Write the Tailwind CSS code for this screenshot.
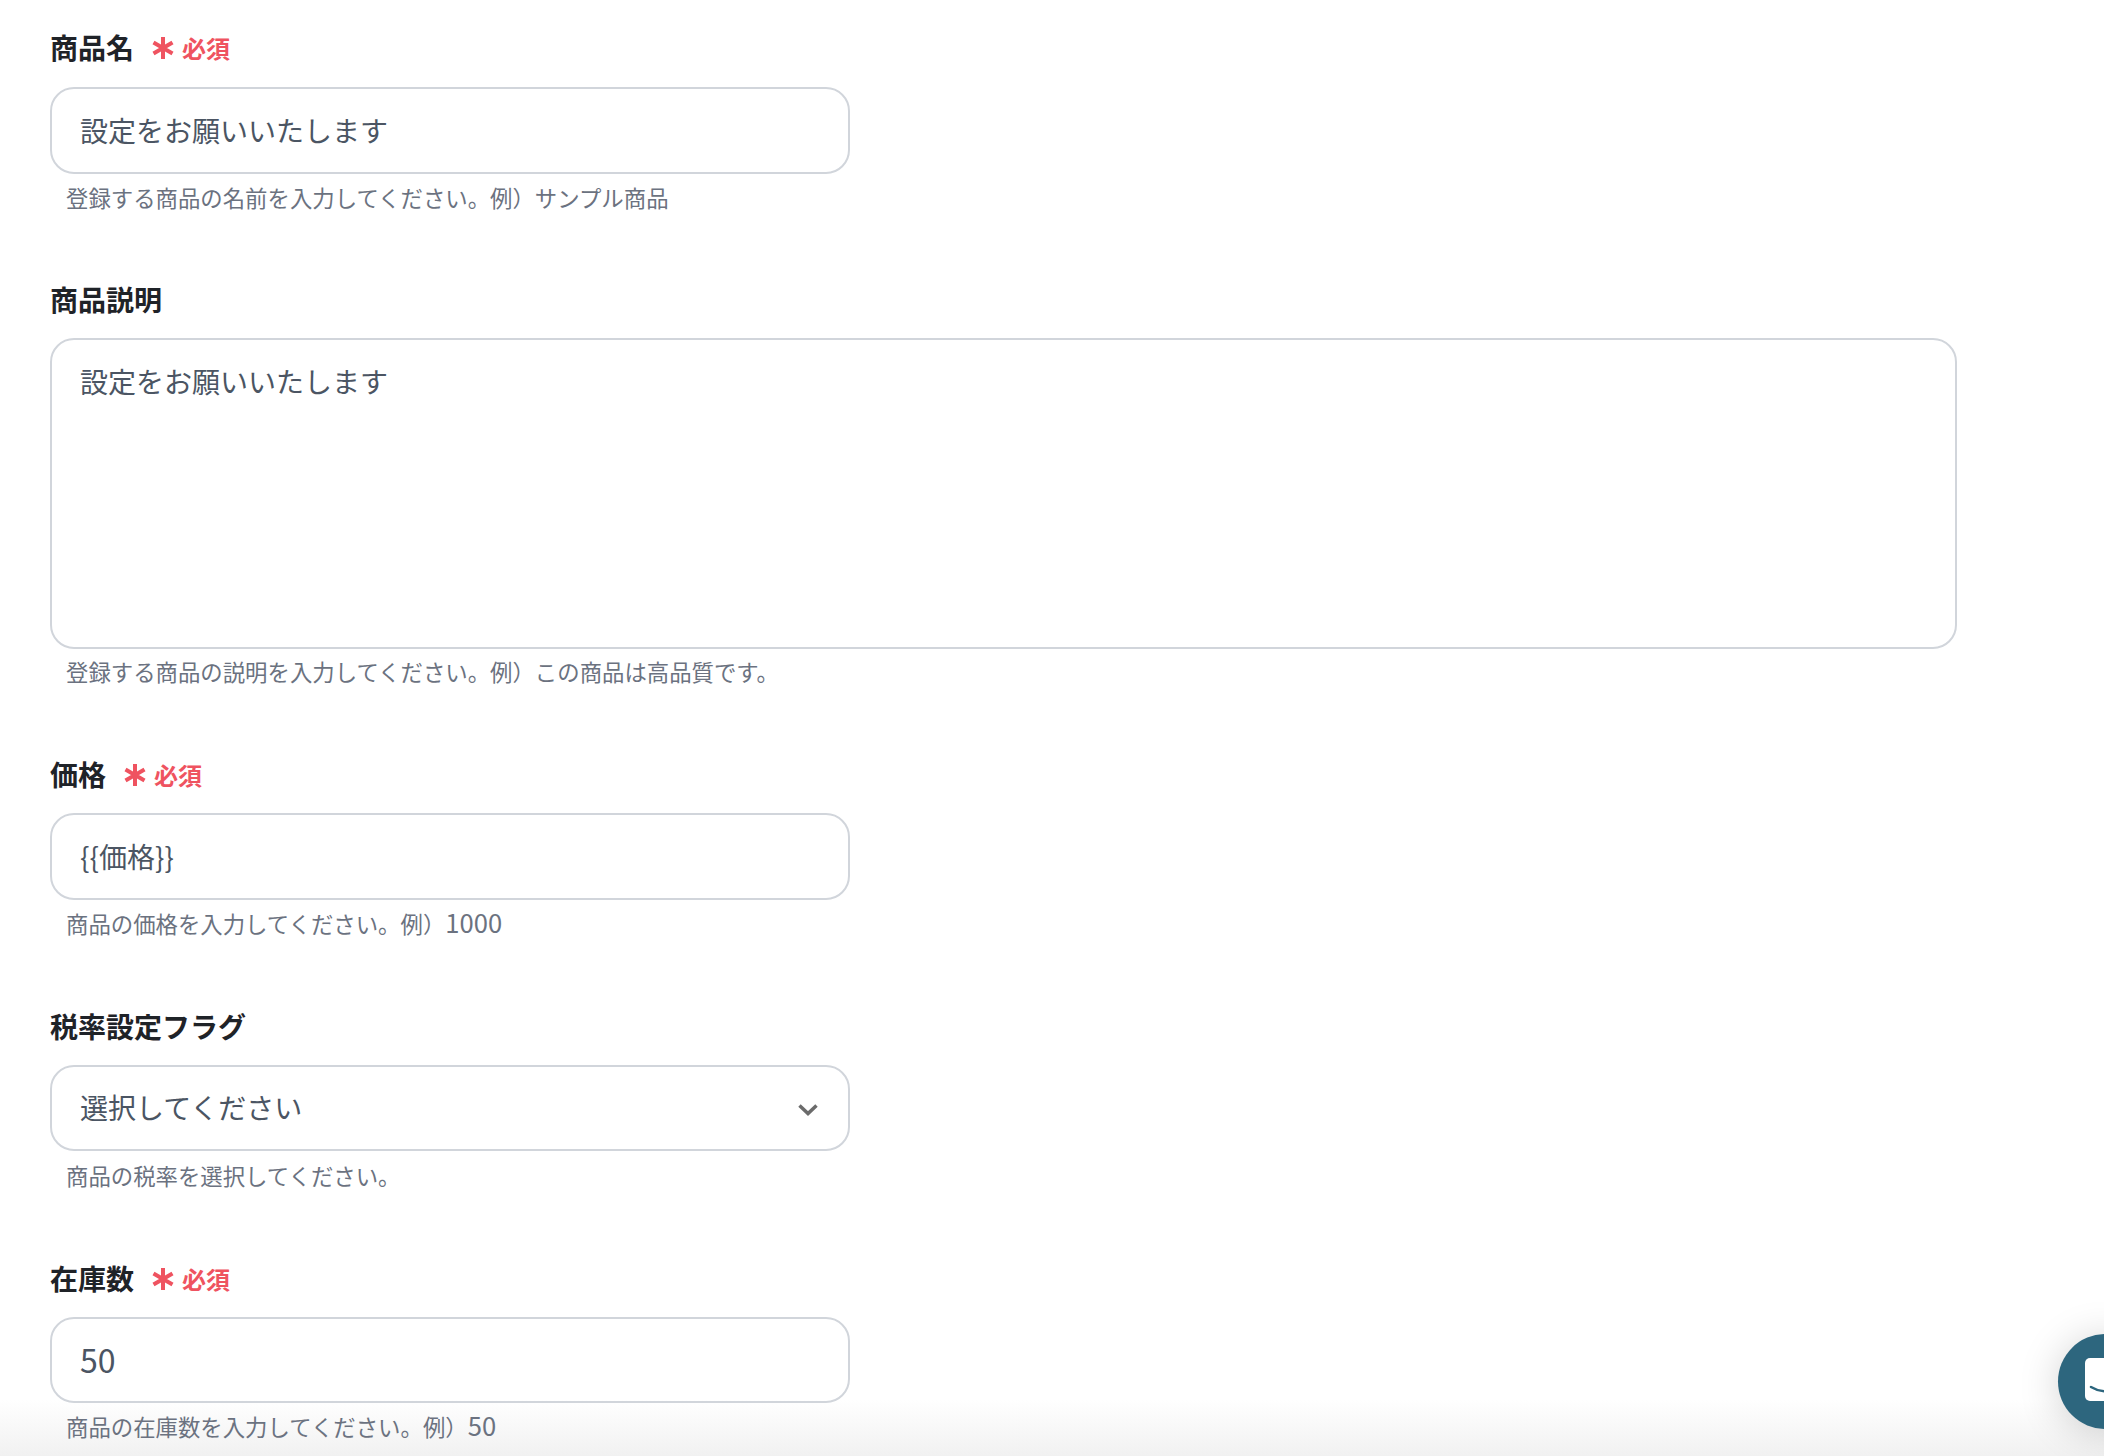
<!DOCTYPE html>
<html lang="ja">
<head>
  <meta charset="UTF-8" />
  <title>商品登録</title>
  <script src="https://cdn.jsdelivr.net/npm/@tailwindcss/browser@4"></script>
</head>
<body class="bg-white overflow-hidden font-['Noto_Sans_CJK_JP','Noto_Sans',sans-serif]">
  <div class="relative h-[1456px] overflow-hidden">

    <!-- bottom fade -->
    <div class="absolute left-0 right-0 bottom-0 h-[56px] bg-gradient-to-b from-white/0 to-[#f1f1f1]"></div>

    <div class="relative pl-[50px] pt-[28px]">
      <!-- 商品名 -->
      <div class="flex items-center h-[39px] mb-[20px]">
        <span class="text-[28px] leading-[39px] font-bold text-[#1f2328]">商品名</span>
        <svg class="ml-[17px] w-[24px] h-[24px] text-[#ef5360]" viewBox="0 0 24 24" fill="none" stroke="currentColor" stroke-width="4"><path d="M12 1v22M2.500 6.500l19 11M21.500 6.500l-19 11"/></svg>
        <span class="ml-[7px] text-[24px] font-bold text-[#ef5360]">必須</span>
      </div>
      <div class="w-[800px] h-[87px] border-2 border-[#d1d5db] rounded-[24px] px-[28px] pb-[2px] flex items-center text-[28px] text-[#4b5563]">設定をお願いいたします</div>
      <p class="pl-[16px] mt-[6px] text-[22.400px] leading-[34px] text-[#6b7280]">登録する商品の名前を入力してください。例）サンプル商品</p>

      <!-- 商品説明 -->
      <div class="flex items-center h-[39px] mt-[66px] mb-[19px]">
        <span class="text-[28px] leading-[39px] font-bold text-[#1f2328]">商品説明</span>
      </div>
      <div class="w-[1907px] h-[311px] border-2 border-[#d1d5db] rounded-[24px] px-[28px] pt-[19px] text-[28px] leading-[44px] text-[#4b5563]">設定をお願いいたします</div>
      <p class="pl-[16px] mt-[5px] text-[22.400px] leading-[34px] text-[#6b7280]">登録する商品の説明を入力してください。例）この商品は高品質です。</p>

      <!-- 価格 -->
      <div class="flex items-center h-[39px] mt-[67px] mb-[19px]">
        <span class="text-[28px] leading-[39px] font-bold text-[#1f2328]">価格</span>
        <svg class="ml-[17px] w-[24px] h-[24px] text-[#ef5360]" viewBox="0 0 24 24" fill="none" stroke="currentColor" stroke-width="4"><path d="M12 1v22M2.500 6.500l19 11M21.500 6.500l-19 11"/></svg>
        <span class="ml-[7px] text-[24px] font-bold text-[#ef5360]">必須</span>
      </div>
      <div class="w-[800px] h-[87px] border-2 border-[#d1d5db] rounded-[24px] px-[28px] pb-[2px] flex items-center text-[28px] text-[#4b5563]">{{価格}}</div>
      <p class="pl-[16px] mt-[6px] text-[22.400px] leading-[34px] text-[#6b7280]">商品の価格を入力してください。例）<span class="text-[25.600px] leading-none">1000</span></p>

      <!-- 税率設定フラグ -->
      <div class="flex items-center h-[39px] mt-[67px] mb-[19px]">
        <span class="text-[28px] leading-[39px] font-bold text-[#1f2328]">税率設定フラグ</span>
      </div>
      <div class="w-[800px] h-[86px] border-2 border-[#d1d5db] rounded-[24px] pl-[28px] pr-[28px] pb-[2px] flex items-center justify-between text-[28px] text-[#4b5563]">
        <span>選択してください</span>
        <svg class="w-[24px] h-[24px] mt-[8px] text-[#6b6b6b]" viewBox="0 0 24 24" fill="none" stroke="currentColor" stroke-width="3.500"><path d="M3.500 6.500l8.500 8 8.500-8"/></svg>
      </div>
      <p class="pl-[16px] mt-[7px] text-[22.400px] leading-[34px] text-[#6b7280]">商品の税率を選択してください。</p>

      <!-- 在庫数 -->
      <div class="flex items-center h-[39px] mt-[67px] mb-[19px]">
        <span class="text-[28px] leading-[39px] font-bold text-[#1f2328]">在庫数</span>
        <svg class="ml-[17px] w-[24px] h-[24px] text-[#ef5360]" viewBox="0 0 24 24" fill="none" stroke="currentColor" stroke-width="4"><path d="M12 1v22M2.500 6.500l19 11M21.500 6.500l-19 11"/></svg>
        <span class="ml-[7px] text-[24px] font-bold text-[#ef5360]">必須</span>
      </div>
      <div class="w-[800px] h-[86px] border-2 border-[#d1d5db] rounded-[24px] px-[28px] pb-[2px] flex items-center text-[32px] text-[#4b5563]">50</div>
      <p class="pl-[16px] mt-[6px] text-[22.400px] leading-[34px] text-[#6b7280]">商品の在庫数を入力してください。例）<span class="text-[25.600px] leading-none">50</span></p>
    </div>

    <!-- chat launcher -->
    <div class="absolute left-[2058px] top-[1334px] w-[95px] h-[95px] rounded-full bg-[#2d667e] shadow-[0_4px_40px_rgba(0,0,0,0.18)]">
      <svg class="absolute left-[27px] top-[24px] w-[60px] h-[44px]" viewBox="0 0 60 44"><rect width="60" height="43" rx="5" fill="#fff"/><path d="M6 29c8 5 20 6 30 3" fill="none" stroke="#2d667e" stroke-width="2.500" stroke-linecap="round"/></svg>
    </div>
  </div>
</body>
</html>
